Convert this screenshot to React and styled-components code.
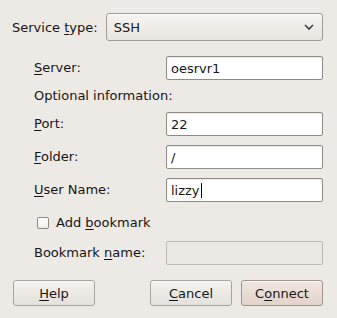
import React from 'react';
import styled, { createGlobalStyle } from 'styled-components';

const GlobalStyle = createGlobalStyle`
  html, body {
    margin: 0;
    padding: 0;
    background: #edeae5;
  }
  body {
    font-family: "DejaVu Sans", "Liberation Sans", sans-serif;
    font-size: 13px;
    color: #161616;
  }
`;

const Dialog = styled.div`
  width: 337px;
  height: 318px;
  box-sizing: border-box;
  padding: 13px 14px 0 12px;
  display: flex;
  flex-direction: column;
`;

const TopRow = styled.div`
  display: flex;
  align-items: center;
  gap: 8px;
`;

const Combo = styled.div`
  flex: 1;
  height: 28px;
  box-sizing: border-box;
  border: 1px solid #a19c95;
  border-radius: 3px;
  background: linear-gradient(#f6f4f1, #e8e4de);
  display: flex;
  align-items: center;
  justify-content: space-between;
  padding: 0 8px 0 7px;
  box-shadow: inset 0 1px 0 #fdfcfb;
`;

const Form = styled.div`
  margin-top: 15px;
  padding-left: 22px;
  display: grid;
  grid-template-columns: 132px 1fr;
  align-items: center;
`;

const Label = styled.div`
  grid-column: ${p => (p.$wide ? '1 / span 2' : '1')};
  margin-top: ${p => p.$top || 0}px;
  line-height: 14px;
`;

const Entry = styled.div`
  grid-column: 2;
  margin-top: ${p => p.$top || 0}px;
  height: 24px;
  box-sizing: border-box;
  border: 1px solid ${p => (p.$disabled ? '#bfbab3' : '#8f8a84')};
  border-radius: 2px;
  background: ${p => (p.$disabled ? '#ebe7e2' : '#ffffff')};
  display: flex;
  align-items: center;
  padding-left: 4px;
  box-shadow: ${p => (p.$disabled ? 'none' : 'inset 0 1px 1px rgba(0,0,0,0.08)')};
`;

const Caret = styled.span`
  display: inline-block;
  width: 1px;
  height: 15px;
  background: #000;
  margin-left: 1px;
`;

const CheckRow = styled.label`
  grid-column: 1 / span 2;
  margin-top: 14px;
  padding-left: 3px;
  display: flex;
  align-items: center;
  gap: 7px;
  line-height: 14px;
`;

const Box = styled.span`
  width: 12px;
  height: 12px;
  box-sizing: border-box;
  border: 1px solid #8f8a84;
  border-radius: 2px;
  background: linear-gradient(#ffffff, #f1eee9);
`;

const Buttons = styled.div`
  margin-top: 15px;
  padding-left: 1px;
  display: flex;
  gap: 9px;
`;

const Button = styled.button`
  width: 82px;
  height: 26px;
  box-sizing: border-box;
  margin-right: ${p => p.$spacer || 0}px;
  border: 1px solid ${p => (p.$default ? '#a2948c' : '#aaa59e')};
  border-radius: 3px;
  background: ${p =>
    p.$default
      ? 'linear-gradient(#f1e6e0, #e2d3ca)'
      : 'linear-gradient(#f4f2ef, #e5e1db)'};
  font-family: inherit;
  font-size: 13px;
  color: #161616;
  padding: 0;
  box-shadow: inset 0 1px 0 rgba(255,255,255,0.7);
`;

const U = styled.span`
  text-decoration: underline;
  text-underline-offset: 2px;
`;

function Chevron() {
  return (
    <svg width="10" height="6" viewBox="0 0 10 6">
      <path d="M1 1 L5 5 L9 1" fill="none" stroke="#3c3a37" strokeWidth="1.6" />
    </svg>
  );
}

export default function App() {
  return (
    <>
      <GlobalStyle />
      <Dialog>
        <TopRow>
          <span>Service <U>t</U>ype:</span>
          <Combo>
            <span>SSH</span>
            <Chevron />
          </Combo>
        </TopRow>
        <Form>
          <Label><U>S</U>erver:</Label>
          <Entry>oesrvr1</Entry>
          <Label $wide $top={9}>Optional information:</Label>
          <Label $top={9}><U>P</U>ort:</Label>
          <Entry $top={9}>22</Entry>
          <Label $top={9}><U>F</U>older:</Label>
          <Entry $top={9}>/</Entry>
          <Label $top={9}><U>U</U>ser Name:</Label>
          <Entry $top={9}>lizzy<Caret /></Entry>
          <CheckRow>
            <Box />
            <span>Add <U>b</U>ookmark</span>
          </CheckRow>
          <Label $top={11}>Bookmark <U>n</U>ame:</Label>
          <Entry $top={11} $disabled />
        </Form>
        <Buttons>
          <Button $spacer={46}><U>H</U>elp</Button>
          <Button><U>C</U>ancel</Button>
          <Button $default>C<U>o</U>nnect</Button>
        </Buttons>
      </Dialog>
    </>
  );
}
